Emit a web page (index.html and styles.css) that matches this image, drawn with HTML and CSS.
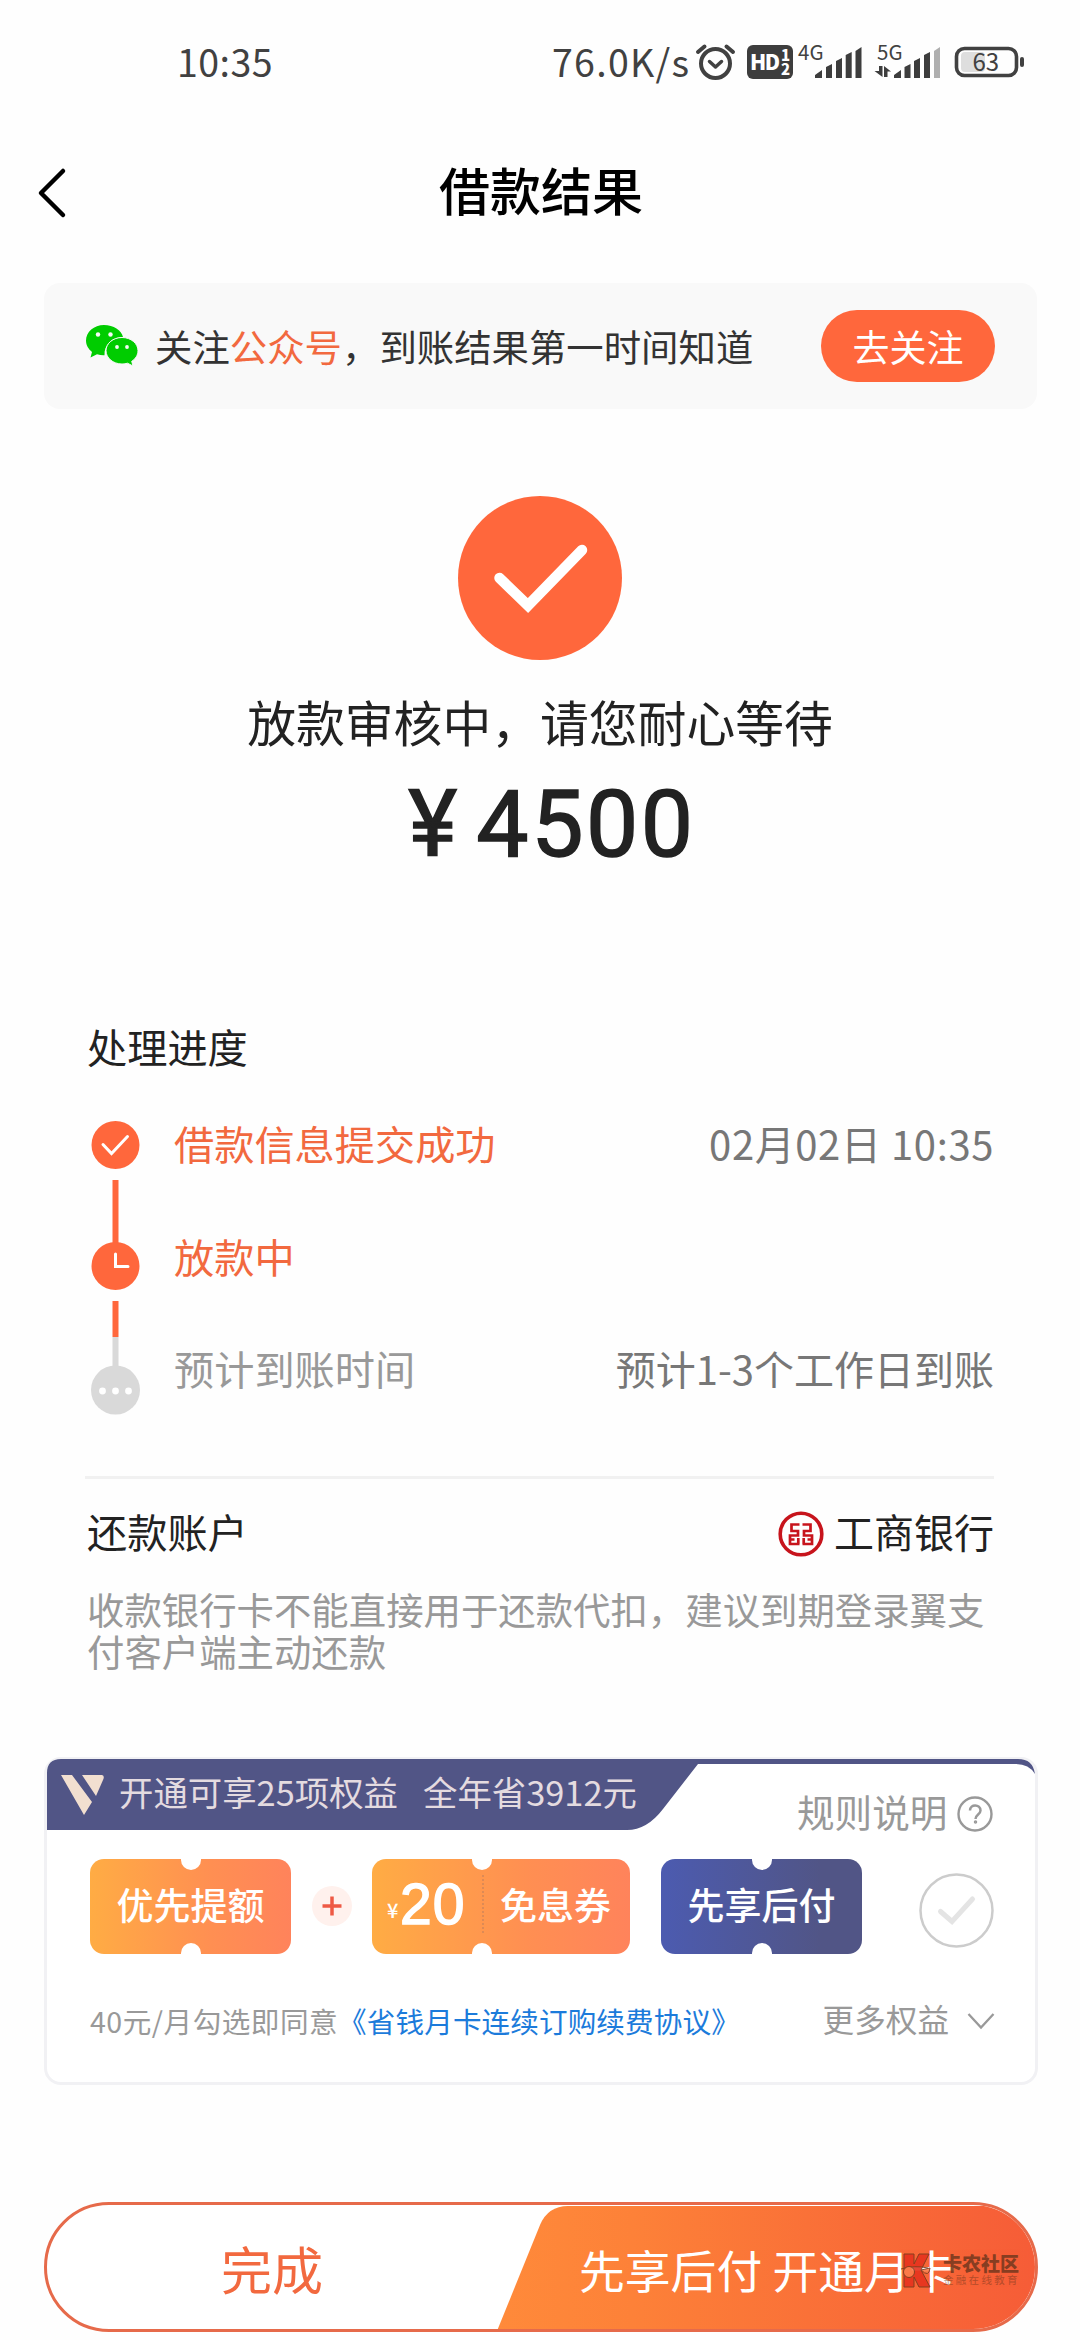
FILE: index.html
```html
<!DOCTYPE html>
<html lang="zh-CN">
<head>
<meta charset="utf-8">
<title>借款结果</title>
<link rel="stylesheet" href="styles.css">
</head>
<body>
<div class="page">
  <header class="status">
    <span class="clock">10:35</span>
    <span class="speed">76.0K/s</span>
    <svg class="status-icons" width="334" height="64" viewBox="695 30 334 64">
      <g fill="none" stroke="#414141" stroke-linecap="round" stroke-linejoin="round">
        <circle cx="715.5" cy="63.5" r="14.5" stroke-width="4"/>
        <path d="M709.5 61.5l6 5.5 6-5.5" stroke-width="3.5"/>
        <path d="M698 52l6.500-5.500M733 52l-6.500-5.500" stroke-width="4"/>
      </g>
      <rect x="747" y="45" width="46" height="34" rx="6" fill="#3d3d3d"/>
      <g class="hd">
        <text x="750" y="70" font-size="21" textLength="30">HD</text>
        <text x="781" y="61" font-size="15">1</text>
        <text x="781" y="75" font-size="15">2</text>
      </g>
      <g class="net">
        <text x="798" y="60">4G</text>
        <text x="877" y="60">5G</text>
      </g>
      <g fill="#3d3d3d">
        <path d="M815 78v-3l7-5v8zM826 78v-11l6-3v14zM836 78v-17l6-3v20zM845.700 78v-23l6-3v26zM855.500 78v-27l6-4v31z"/>
        <path d="M894 78v-3l7-5v8zM904.500 78v-11l6-3v14zM914 78v-17l6-3v20zM924 78v-23l6-3v26z"/>
        <path d="M934 78v-27l6-4v31z" fill="#afafaf"/>
        <path d="M879 66h3.500v11l-8-6h4.500zM884 77v-11l7 5.500h-3.500v5.500z"/>
      </g>
      <rect x="961" y="52" width="24" height="20" rx="4" fill="#dedede"/>
      <rect x="956.500" y="48.500" width="60" height="27" rx="8" fill="none" stroke="#414141" stroke-width="3.600"/>
      <rect x="1020" y="57" width="4" height="10" rx="2" fill="#414141"/>
      <text class="charge" x="972.500" y="71">63</text>
    </svg>
  </header>

  <nav class="nav">
    <svg class="back" width="32" height="52" viewBox="0 0 32 52"><path d="M27 4L5 26l22 22" fill="none" stroke="#000" stroke-width="4.500" stroke-linecap="round" stroke-linejoin="round"/></svg>
    <h1>借款结果</h1>
  </nav>

  <section class="banner">
    <svg width="52" height="41" viewBox="0 0 52 41">
      <path fill="#0c0" d="M18 0C8 0 0 7 0 15.500c0 5 2.500 8.500 6 11.500l-1.500 5.500 6.500-3.200c2.500.7 5 1 7.500.9C18 20 26 12 37 12 35.500 5 27.500 0 18 0z"/>
      <path fill="#0c0" stroke="#f9f9f9" stroke-width="1" d="M36 12.500c-9 0-16 6-16 13.200S27 39 36 39c2 0 4-.3 5.500-.8L47 41l-1.300-4.700C49.500 34 52 30 52 25.700c0-7.200-7-13.200-16-13.200z"/>
      <g fill="#f9f9f9"><circle cx="12" cy="9.500" r="2.200"/><circle cx="24.500" cy="9.500" r="2.200"/><circle cx="31" cy="22" r="1.900"/><circle cx="41" cy="22" r="1.900"/></g>
    </svg>
    <p>关注<em>公众号</em>，到账结果第一时间知道</p>
    <button class="follow">去关注</button>
  </section>

  <section class="result">
    <svg width="164" height="164" viewBox="0 0 164 164"><circle cx="82" cy="82" r="82" fill="#ff673c"/><path d="M41.500 82L70 109.500 124 54" fill="none" stroke="#fff" stroke-width="10.500" stroke-linecap="round"/></svg>
    <h2>放款审核中，请您耐心等待</h2>
    <div class="amount"><span class="yen">¥</span><span>4500</span></div>
  </section>

  <section class="progress">
    <h3>处理进度</h3>
    <div class="steps">
      <svg class="rail" width="50" height="296" viewBox="90 1120 50 296">
        <path d="M115.500 1180v64M115.500 1301v36" stroke="#ff673c" stroke-width="6"/>
        <path d="M115.500 1337v32" stroke="#d9d9d9" stroke-width="6"/>
        <circle cx="115.500" cy="1145" r="24" fill="#ff673c"/><circle cx="115.500" cy="1266" r="24" fill="#ff673c"/><circle cx="115.500" cy="1390" r="24.500" fill="#d9d9d9"/>
        <path d="M103 1144.500l8.500 9 16-17M115.500 1254v12.500h12.500" fill="none" stroke="#fff" stroke-width="3" stroke-linecap="round"/>
        <g fill="#fff"><circle cx="102.500" cy="1391" r="3.400"/><circle cx="115.500" cy="1391" r="3.400"/><circle cx="128.500" cy="1391" r="3.400"/></g>
      </svg>
      <ul>
        <li class="done"><span>借款信息提交成功</span><time class="stamp">02月02日 10:35</time></li>
        <li class="done"><span>放款中</span></li>
        <li><span>预计到账时间</span><time>预计1-3个工作日到账</time></li>
      </ul>
    </div>
  </section>

  <section class="account">
    <div class="account-row">
      <h3>还款账户</h3>
      <svg width="46" height="46" viewBox="0 0 46 46"><circle cx="23" cy="23" r="20.800" fill="none" stroke="#c7141c" stroke-width="3.600"/>
        <path d="M21.500 13.500H13.500v6.500h6.500v4.500H12v8.500h9.500M12 28.500h4.500M24.500 13.500h8v6.500H26v4.500h8v8.500h-9.500M34 28.500h-4.500M20.300 27v6M25.700 27v6" fill="none" stroke="#c7141c" stroke-width="2.700"/></svg>
      <strong>工商银行</strong>
    </div>
    <p>收款银行卡不能直接用于还款代扣，建议到期登录翼支付客户端主动还款</p>
  </section>

  <section class="card">
    <svg class="card-top" width="988" height="72" viewBox="0 0 988 72">
      <path fill="#515586" d="M0 72V14Q0 0 14 0H971Q986 0 988 15 982 5 969 5H651L616 50Q600 71 580 71H0z"/>
      <path fill="#f2dfd0" d="M14 16h11l20 27-8 13zM35 16h20q3 1 1 5L49 37z"/>
    </svg>
    <div class="card-head">
      <span class="benefit">开通可享25项权益</span><span class="saving">全年省3912元</span>
      <a class="rules">规则说明</a>
      <svg width="36" height="36" viewBox="0 0 36 36" fill="none" stroke="#999" stroke-width="2.400"><circle cx="18" cy="18" r="16.500"/><path d="M13 14.500c0-7 10.500-6.500 10.500 0 0 4-5 4-5 8.500" stroke-width="2.500"/><circle cx="18.500" cy="26" r="1" stroke-width="1.500"/></svg>
    </div>
    <div class="tickets">
      <span class="ticket gold">优先提额</span>
      <svg class="plus" width="40" height="40" viewBox="0 0 40 40"><circle cx="20" cy="20" r="20" fill="#fff1ed"/><path d="M20 10.500v19M10.500 20h19" stroke="#ee5a45" stroke-width="3.500"/></svg>
      <span class="ticket gold coupon"><small>¥</small><b>20</b><i></i><span>免息券</span></span>
      <span class="ticket navy">先享后付</span>
      <svg class="pick" width="75" height="75" viewBox="0 0 75 75" fill="none"><circle cx="37.500" cy="37.500" r="36" stroke="#ccc" stroke-width="2.500"/><path d="M21.500 38.500l11.500 10 20.500-22.500" stroke="#e4e4e4" stroke-width="5" stroke-linecap="round"/></svg>
    </div>
    <div class="terms">
      <span class="price">40元/月勾选即同意</span><a>《省钱月卡连续订购续费协议》</a>
      <span class="more">更多权益</span>
      <svg width="28" height="18" viewBox="0 0 28 18"><path d="M1.500 2L14 15.500 26.500 2" fill="none" stroke="#999" stroke-width="2.300"/></svg>
    </div>
  </section>

  <footer class="actions">
    <button class="finish">完成</button>
    <button class="open">
      <svg width="540" height="126" viewBox="0 0 540 126">
        <defs><linearGradient id="fire"><stop offset="0" stop-color="#ff8a3a"/><stop offset=".25" stop-color="#fd8138"/><stop offset="1" stop-color="#f65c37"/></linearGradient></defs>
        <path fill="url(#fire)" d="M0 126L43 20Q51 1 71 1H540V126z"/>
      </svg>
      <span>先享后付 开通月卡</span>
    </button>
    <div class="mark">
      <svg width="42" height="36" viewBox="0 0 42 36">
        <path d="M4 1h10v10L19 1h10L21 17l9 17H19l-5-10v10H4z" fill="#e6321e" stroke="#7a3a1c" stroke-width="1"/>
        <path d="M1 16q14-4 27-1" fill="none" stroke="#7a3a1c"/><circle cx="9" cy="19" r="5.500" fill="#fb7d4c" stroke="#7a3a1c"/><path d="M21 17q8 8 9-2z" fill="#fb7d4c" stroke="#7a3a1c"/>
      </svg>
      <div><b>卡农社区</b><small>金融在线教育</small></div>
    </div>
  </footer>
</div>
</body>
</html>
```
FILE: styles.css
```css
* { box-sizing: border-box; margin: 0; padding: 0; }
body {
  width: 1080px; height: 2340px; overflow: hidden; background: #fefefe;
  font-family: "Noto Sans CJK SC", sans-serif; color: #222;
}
svg { display: block; flex: none; }
button { border: 0; background: none; font: inherit; }
h1, h2, h3 { font-weight: 400; }
.page { display: flex; flex-direction: column; height: 2340px; }

.status { display: flex; align-items: center; height: 124px; padding-left: 177px; font-size: 37.5px; line-height: 56px; color: #414141; }
.clock { width: 375px; letter-spacing: .5px; padding-bottom: 2px; }
.speed { width: 143px; letter-spacing: 1.3px; padding-bottom: 2px; white-space: nowrap; }
.status-icons text { font-family: "Noto Sans CJK SC", sans-serif; fill: #414141; }
.status-icons .hd text { fill: #fff; font-weight: 900; }
.status-icons .net text { font-size: 20.5px; }
.status-icons .charge { font-size: 24px; }

.nav { display: grid; grid-template-columns: 80px 1fr 80px; align-items: center; height: 138px; }
.back { margin-left: 36px; }
.nav h1 { text-align: center; font-size: 51px; font-weight: 500; line-height: 70px; color: #000; margin: -8px 0 0 2px; }

.banner { display: flex; align-items: center; height: 126px; margin: 21px 43px 0 44px; padding: 0 42px; border-radius: 16px; background: #f9f9f9; }
.banner svg { margin-top: -2px; }
.banner p { margin-left: 17px; font-size: 37.4px; line-height: 56px; color: #333; white-space: nowrap; }
.banner em { font-style: normal; color: #f2693f; }
.follow { margin-left: auto; width: 174px; height: 72px; border-radius: 36px; background: #ff673c; color: #fff; font-size: 37px; line-height: 70px; }

.result { display: flex; flex-direction: column; align-items: center; margin-top: 87px; }
.result h2 { margin-top: 31px; font-size: 48.8px; line-height: 60px; white-space: nowrap; }
.amount { display: flex; margin: 19px 0 0 24px; height: 110px; line-height: 110px; font-family: Roboto, sans-serif; font-weight: 400; font-size: 93px; letter-spacing: 2.6px; -webkit-text-stroke: 1.5px #222; }
.yen { width: 68px; }

.progress { padding: 0 86px 0 87px; margin-top: 138px; }
.progress h3, .account h3 { font-size: 40.2px; line-height: 56px; }
.steps { display: flex; margin-top: 46px; padding-left: 3px; }
.steps ul { flex: 1; list-style: none; padding-left: 34px; margin-top: -33px; }
.steps li { display: flex; justify-content: space-between; height: 112.5px; align-items: center; font-size: 40.2px; line-height: 56px; color: #999; }
.steps .done { color: #f2693f; }
.steps time { color: #777; font-size: 40px; }
.steps .stamp { letter-spacing: .6px; }

.account { margin: 51px 86px 0 85px; border-top: 3px solid #f1f1f1; padding: 23px 0 0 2px; }
.account-row { display: flex; align-items: center; height: 58px; }
.account-row svg { margin: 7px 10px 0 auto; }
.account-row strong { font-weight: 400; font-size: 40px; line-height: 56px; }
.account p { margin-top: 28px; width: 902px; font-size: 37.4px; line-height: 42px; color: #999; }

.card { position: relative; width: 994px; height: 328px; margin: 85px 0 0 44px; border: 3px solid #f1f1f4; border-radius: 17px; background: #fff; flex: none; }
.card-top { position: absolute; left: 0; top: -1px; }
.card-head { position: relative; display: flex; height: 70px; padding-left: 72px; font-size: 34.4px; line-height: 62px; color: #e4dbe0; white-space: nowrap; }
.benefit { width: 304px; }
.saving { width: 374px; }
.rules { width: 160px; font-size: 37.6px; line-height: 102px; color: #999; }
.card-head svg { margin-top: 36px; }
.tickets { display: flex; align-items: center; height: 95px; margin: 29px 0 0 43px; }
.ticket { position: relative; display: flex; align-items: center; justify-content: center; width: 201px; height: 95px; border-radius: 14px; color: #fff; font-size: 37px; font-weight: 500; line-height: 50px; padding-bottom: 4px; }
.ticket::before, .ticket::after { content: ""; position: absolute; left: calc(50% - 10px); width: 20px; height: 11px; background: #fff; }
.ticket::before { top: 0; border-radius: 0 0 10px 10px; }
.ticket::after { bottom: 0; border-radius: 10px 10px 0 0; }
.gold { background: linear-gradient(90deg, #ffac44, #ff8f52 60%, #ff835b); }
.navy { margin-left: 31px; background: linear-gradient(90deg, #4c5bb0, #515586 80%); }
.plus { margin: 0 20px 0 21px; }
.coupon { width: 258px; justify-content: flex-start; padding-left: 15px; }
.coupon::before, .coupon::after { left: 100px; }
.coupon small { width: 13px; margin-top: 12px; font-size: 20px; line-height: 30px; font-weight: 500; }
.coupon b { width: 82px; font-family: "Liberation Sans", sans-serif; font-size: 57px; font-weight: 400; letter-spacing: 1px; -webkit-text-stroke: 1.5px #fff; line-height: 60px; margin-top: 0; }
.coupon i { width: 18px; height: 58px; border-left: 2px dotted #dd8a55; }
.pick { margin: 9px 0 0 57px; }
.terms { display: flex; align-items: center; height: 60px; margin: 37px 0 0 43px; padding-right: 40px; font-size: 28.6px; color: #999; white-space: nowrap; }
.price { letter-spacing: .5px; }
.terms a { color: #1c7bdb; letter-spacing: .1px; }
.more { margin: -5px 18px 0 auto; font-size: 31.6px; }

.actions { position: relative; display: flex; width: 994px; height: 130px; margin: 117px 0 0 44px; border: 3px solid #e66a4a; border-radius: 65px; background: #fff; overflow: hidden; flex: none; }
.finish { width: 450px; text-align: center; font-size: 51px; line-height: 126px; color: #f2693f; }
.open { position: relative; flex: 1; text-align: left; color: #fff; font-size: 45.8px; line-height: 128px; white-space: nowrap; }
.open svg { position: absolute; left: 0; top: 0; }
.open span { position: relative; padding-left: 82px; }
.mark { position: absolute; left: 853px; top: 48px; display: flex; opacity: .9; color: #7a3a20; }
.mark div { display: flex; flex-direction: column; margin-left: 1px; }
.mark b { font-size: 19px; line-height: 20px; font-weight: 900; white-space: nowrap; }
.mark small { font-size: 10.5px; line-height: 14px; letter-spacing: 2.3px; opacity: .6; white-space: nowrap; }
```
